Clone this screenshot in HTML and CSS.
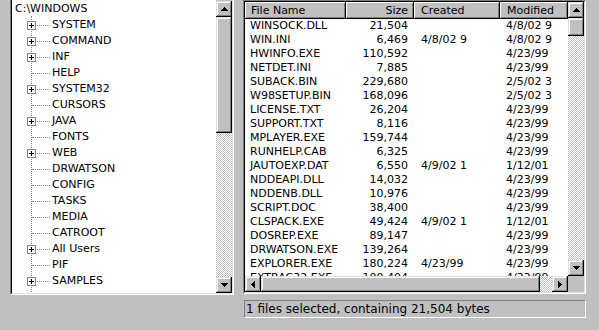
FILE: index.html
```html
<!DOCTYPE html>
<html lang="en">
<head>
    <meta charset="UTF-8">
    <title>Explorer</title>
    <link rel="stylesheet" href="styles.css">
</head>
<body>
    <div class="window">
        <!-- folder tree -->
        <div class="pane tree-pane">
            <div class="pane-inner">
                <div class="tree">
                    <div class="root">C:\WINDOWS</div>
                    <ul class="children">
                        <li class="node"><svg class="expander" width="9" height="9"><rect x="0.5" y="0.5" width="8" height="8" fill="#fff" stroke="#808080"/><path d="M2 4.5h5M4.5 2v5" stroke="#000"/></svg><span>SYSTEM</span></li>
                        <li class="node"><svg class="expander" width="9" height="9"><rect x="0.5" y="0.5" width="8" height="8" fill="#fff" stroke="#808080"/><path d="M2 4.5h5M4.5 2v5" stroke="#000"/></svg><span>COMMAND</span></li>
                        <li class="node"><svg class="expander" width="9" height="9"><rect x="0.5" y="0.5" width="8" height="8" fill="#fff" stroke="#808080"/><path d="M2 4.5h5M4.5 2v5" stroke="#000"/></svg><span>INF</span></li>
                        <li class="node"><span>HELP</span></li>
                        <li class="node"><svg class="expander" width="9" height="9"><rect x="0.5" y="0.5" width="8" height="8" fill="#fff" stroke="#808080"/><path d="M2 4.5h5M4.5 2v5" stroke="#000"/></svg><span>SYSTEM32</span></li>
                        <li class="node"><span>CURSORS</span></li>
                        <li class="node"><svg class="expander" width="9" height="9"><rect x="0.5" y="0.5" width="8" height="8" fill="#fff" stroke="#808080"/><path d="M2 4.5h5M4.5 2v5" stroke="#000"/></svg><span>JAVA</span></li>
                        <li class="node"><span>FONTS</span></li>
                        <li class="node"><svg class="expander" width="9" height="9"><rect x="0.5" y="0.5" width="8" height="8" fill="#fff" stroke="#808080"/><path d="M2 4.5h5M4.5 2v5" stroke="#000"/></svg><span>WEB</span></li>
                        <li class="node"><span>DRWATSON</span></li>
                        <li class="node"><span>CONFIG</span></li>
                        <li class="node"><span>TASKS</span></li>
                        <li class="node"><span>MEDIA</span></li>
                        <li class="node"><span>CATROOT</span></li>
                        <li class="node"><svg class="expander" width="9" height="9"><rect x="0.5" y="0.5" width="8" height="8" fill="#fff" stroke="#808080"/><path d="M2 4.5h5M4.5 2v5" stroke="#000"/></svg><span>All Users</span></li>
                        <li class="node"><span>PIF</span></li>
                        <li class="node"><svg class="expander" width="9" height="9"><rect x="0.5" y="0.5" width="8" height="8" fill="#fff" stroke="#808080"/><path d="M2 4.5h5M4.5 2v5" stroke="#000"/></svg><span>SAMPLES</span></li>
                    </ul>
                </div>
                <div class="vscroll tree-scroll">
                    <div class="sbtn"><svg width="7" height="4" shape-rendering="crispEdges"><path d="M3 0h1v1h1v1h1v1h1v1H0V3h1V2h1V1h1z"/></svg></div>
                    <div class="thumb tree-thumb"></div>
                    <div class="track"></div>
                    <div class="sbtn"><svg width="7" height="4" shape-rendering="crispEdges"><path d="M0 0h7v1H6v1H5v1H4v1H3V3H2V2H1V1H0z"/></svg></div>
                </div>
            </div>
        </div>

        <div class="right">
            <!-- file list -->
            <div class="pane list-pane">
                <div class="pane-inner list-grid">
                    <div class="list-view">
                        <table class="files">
                            <colgroup>
                                <col class="c-name"><col class="c-size"><col class="c-created"><col class="c-mod">
                            </colgroup>
                            <thead>
                                <tr><th>File Name</th><th class="num">Size</th><th>Created</th><th>Modified</th></tr>
                            </thead>
                            <tbody>
                                <tr><td>WINSOCK.DLL</td><td class="num">21,504</td><td></td><td>4/8/02 9</td></tr>
                                <tr><td>WIN.INI</td><td class="num">6,469</td><td>4/8/02 9</td><td>4/8/02 9</td></tr>
                                <tr><td>HWINFO.EXE</td><td class="num">110,592</td><td></td><td>4/23/99</td></tr>
                                <tr><td>NETDET.INI</td><td class="num">7,885</td><td></td><td>4/23/99</td></tr>
                                <tr><td>SUBACK.BIN</td><td class="num">229,680</td><td></td><td>2/5/02 3</td></tr>
                                <tr><td>W98SETUP.BIN</td><td class="num">168,096</td><td></td><td>2/5/02 3</td></tr>
                                <tr><td>LICENSE.TXT</td><td class="num">26,204</td><td></td><td>4/23/99</td></tr>
                                <tr><td>SUPPORT.TXT</td><td class="num">8,116</td><td></td><td>4/23/99</td></tr>
                                <tr><td>MPLAYER.EXE</td><td class="num">159,744</td><td></td><td>4/23/99</td></tr>
                                <tr><td>RUNHELP.CAB</td><td class="num">6,325</td><td></td><td>4/23/99</td></tr>
                                <tr><td>JAUTOEXP.DAT</td><td class="num">6,550</td><td>4/9/02 1</td><td>1/12/01</td></tr>
                                <tr><td>NDDEAPI.DLL</td><td class="num">14,032</td><td></td><td>4/23/99</td></tr>
                                <tr><td>NDDENB.DLL</td><td class="num">10,976</td><td></td><td>4/23/99</td></tr>
                                <tr><td>SCRIPT.DOC</td><td class="num">38,400</td><td></td><td>4/23/99</td></tr>
                                <tr><td>CLSPACK.EXE</td><td class="num">49,424</td><td>4/9/02 1</td><td>1/12/01</td></tr>
                                <tr><td>DOSREP.EXE</td><td class="num">89,147</td><td></td><td>4/23/99</td></tr>
                                <tr><td>DRWATSON.EXE</td><td class="num">139,264</td><td></td><td>4/23/99</td></tr>
                                <tr><td>EXPLORER.EXE</td><td class="num">180,224</td><td>4/23/99</td><td>4/23/99</td></tr>
                                <tr><td>EXTRAC32.EXE</td><td class="num">100,404</td><td></td><td>4/23/99</td></tr>
                            </tbody>
                        </table>
                    </div>
                    <div class="vscroll">
                        <div class="sbtn"><svg width="7" height="4" shape-rendering="crispEdges"><path d="M3 0h1v1h1v1h1v1h1v1H0V3h1V2h1V1h1z"/></svg></div>
                        <div class="thumb list-thumb"></div>
                        <div class="track"></div>
                        <div class="sbtn"><svg width="7" height="4" shape-rendering="crispEdges"><path d="M0 0h7v1H6v1H5v1H4v1H3V3H2V2H1V1H0z"/></svg></div>
                    </div>
                    <div class="hscroll">
                        <div class="sbtn"><svg width="4" height="7" shape-rendering="crispEdges"><path d="M4 0H3v1H2v1H1v1H0v1h1v1h1v1h1v1h1z"/></svg></div>
                        <div class="thumb h-thumb"></div>
                        <div class="track"></div>
                        <div class="sbtn"><svg width="4" height="7" shape-rendering="crispEdges"><path d="M0 0h1v1h1v1h1v1h1v1H3v1H2v1H1v1H0z"/></svg></div>
                    </div>
                    <div class="corner"></div>
                </div>
            </div>
            <div class="status">1 files selected, containing 21,504 bytes</div>
        </div>
    </div>
</body>
</html>
```

FILE: styles.css
```css
body {
    margin: 0;
    background: #c0c0c0;
    font-family: "DejaVu Sans", Verdana, sans-serif;
    font-size: 11px;
    color: #000;
    overflow: hidden;
}
.window {
    display: flex;
    gap: 9px;
    padding-left: 10px;
    height: 330px;
}

/* sunken 3d frame */
.pane {
    box-sizing: border-box;
    border: 1px solid;
    border-color: #808080 #fff #fff #808080;
}
.pane-inner {
    box-sizing: border-box;
    height: 100%;
    border: 1px solid;
    border-color: #000 #dfdfdf #dfdfdf #000;
}

/* tree */
.tree-pane {
    width: 224px;
    height: 295px;
    border-top: 0;
}
.tree-pane .pane-inner {
    display: flex;
    border-top: 0;
}
.tree {
    flex: 1;
    background: #fff;
    overflow: hidden;
}
.root {
    height: 16px;
    line-height: 18px;
    padding-left: 3px;
}
.children {
    list-style: none;
    margin: 0 0 0 19px;
    padding: 0 0 10px;
    border-left: 1px dotted #808080;
}
.node {
    position: relative;
    display: flex;
    height: 16px;
    line-height: 18px;
    white-space: nowrap;
}
.node::before {
    content: "";
    align-self: flex-start;
    width: 18px;
    height: 0;
    margin: 9px 2px 0 0;
    border-top: 1px dotted #808080;
}
.expander {
    position: absolute;
    left: -5px;
    top: 5px;
}

/* scrollbars */
.vscroll {
    width: 16px;
    display: flex;
    flex-direction: column;
    background: #c0c0c0;
}
.tree-scroll {
    padding-top: 1px;
}
.hscroll {
    height: 16px;
    display: flex;
}
.sbtn, .thumb {
    box-sizing: border-box;
    background: #c0c0c0;
    box-shadow: inset -1px -1px #000, inset 1px 1px #dfdfdf, inset -2px -2px #808080, inset 2px 2px #fff;
}
.sbtn {
    width: 16px;
    height: 16px;
    flex: none;
    display: flex;
    align-items: center;
    justify-content: center;
}
.thumb {
    flex: none;
}
.tree-thumb {
    height: 116px;
}
.list-thumb {
    height: 18px;
}
.h-thumb {
    width: 279px;
}
.track {
    flex: 1;
    background: repeating-conic-gradient(#c0c0c0 0 25%, #fff 0 50%) 0 0 / 2px 2px;
}
.corner {
    background: #c0c0c0;
}

/* file list */
.right {
    width: 343px;
    display: flex;
    flex-direction: column;
    gap: 6px;
}
.list-pane {
    height: 294px;
}
.list-grid {
    display: grid;
    grid-template-columns: 323px 16px;
    grid-template-rows: 274px 16px;
}
.list-view {
    background: #fff;
    overflow: hidden;
}
.files {
    width: 323px;
    table-layout: fixed;
    border-collapse: collapse;
}
.c-name { width: 101px; }
.c-size { width: 68px; }
.c-created { width: 86px; }
.c-mod { width: 68px; }
.files th {
    height: 17px;
    padding: 0 0 0 6px;
    font-weight: normal;
    text-align: left;
    line-height: 15px;
    background: #c0c0c0;
    box-shadow: inset -1px -1px #000, inset 1px 1px #fff, inset -2px -2px #808080;
    white-space: nowrap;
    overflow: hidden;
}
.files td {
    height: 14px;
    line-height: 14px;
    padding: 0 0 0 5px;
    white-space: nowrap;
    overflow: hidden;
}
.files th:nth-child(3), .files td:nth-child(3) {
    padding-left: 7px;
}
.files th:nth-child(4) {
    padding-left: 7px;
}
.files td:nth-child(4) {
    padding-left: 6px;
}
.files .num {
    text-align: right;
    padding: 0 6px 0 0;
}

.status {
    box-sizing: border-box;
    height: 18px;
    margin-left: 1px;
    padding-left: 1px;
    border: 1px solid;
    border-color: #808080 #fff #fff #808080;
    font-size: 12px;
    line-height: 16px;
    white-space: nowrap;
    overflow: hidden;
}
```
